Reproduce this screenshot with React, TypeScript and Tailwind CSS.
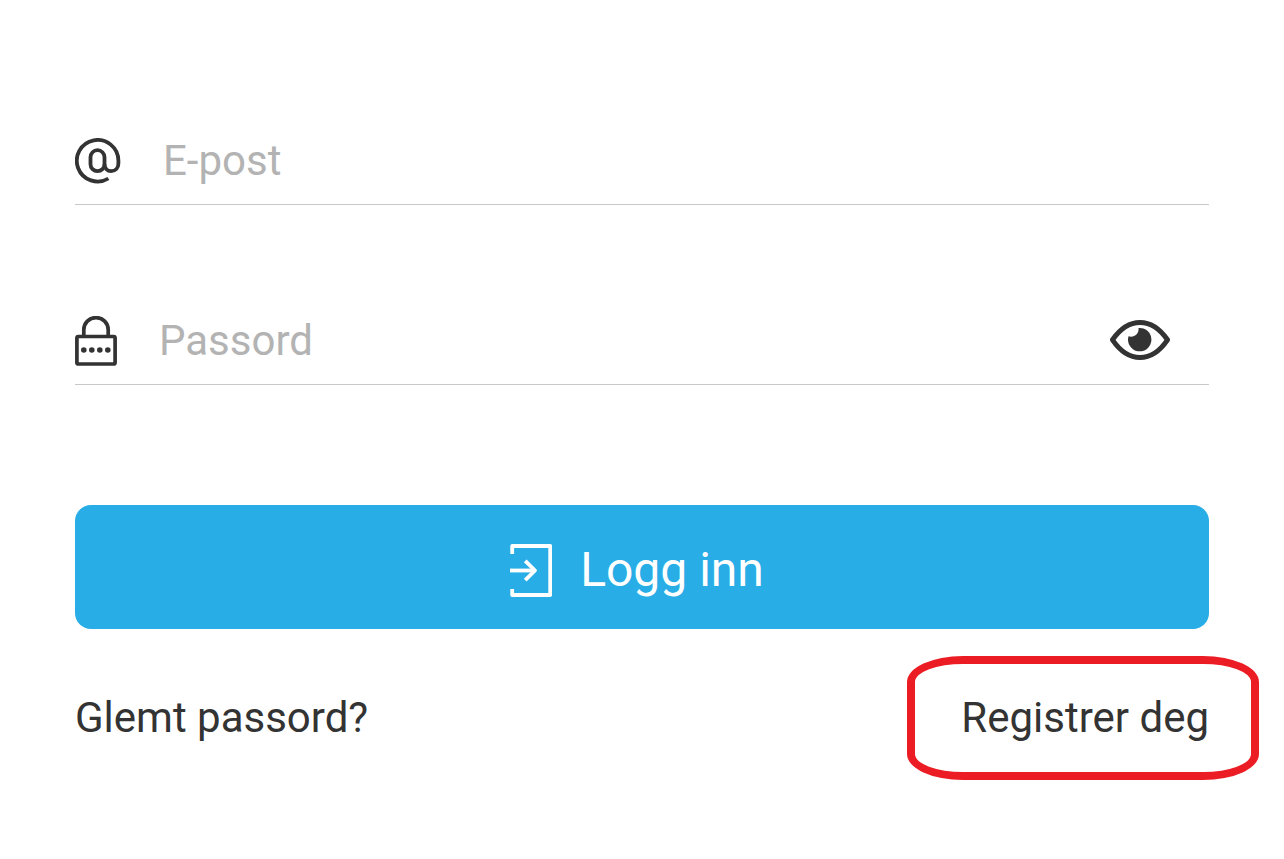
import { useState } from 'react';

const iconStroke = {
  fill: 'none',
  stroke: 'currentColor',
  strokeLinecap: 'round',
  strokeLinejoin: 'round',
} as const;

function AtIcon() {
  return (
    <svg viewBox="0 0 46 46" className="w-[46px] shrink-0" strokeWidth="3.8" {...iconStroke} strokeLinecap="butt" aria-hidden="true">
      <rect x="15.5" y="12.2" width="14" height="21" rx="7" />
      <path d="M29.5 26c.2 4.5 2.7 7.2 6.6 7.200 4.200 0 7.300-3.200 7.300-7.700v-3A20.800 20.800 0 1 0 33.400 40.500" />
    </svg>
  );
}

function LockIcon() {
  return (
    <svg viewBox="0 0 42 50" className="w-[42px] shrink-0" strokeWidth="3.7" {...iconStroke} aria-hidden="true">
      <rect x="1.900" y="20.500" width="38.200" height="27.500" rx="1.500" />
      <path d="M8.800 20v-6.200a12.200 12.200 0 0 1 24.400 0V20" />
      <g fill="currentColor" stroke="none">
        <circle cx="8.800" cy="34" r="2.800" />
        <circle cx="16.800" cy="34" r="2.800" />
        <circle cx="24.800" cy="34" r="2.800" />
        <circle cx="32.800" cy="34" r="2.800" />
      </g>
    </svg>
  );
}

function EyeIcon() {
  return (
    <svg viewBox="0 0 60 41" className="w-[60px]" strokeWidth="5" {...iconStroke} aria-hidden="true">
      <path d="M2.500 19.800C10 9 18.500 2.500 30 2.500s20 6.500 27.500 17.300C50 30.800 41.500 37.500 30 37.500s-20-6.700-27.500-17.700Z" />
      <path
        d="M28.500 8A11.700 11.700 0 1 1 18.500 16.300C23.500 18.200 29.500 14 28.500 8Z"
        fill="currentColor"
        stroke="none"
      />
    </svg>
  );
}

function LoginIcon() {
  return (
    <svg viewBox="0 0 42 53" className="w-[42px]" strokeWidth="3.800" {...iconStroke} strokeLinecap="butt" aria-hidden="true">
      <path d="M2.200 10V2h38v49h-38v-6" />
      <path d="M0 26.500h25" />
      <path d="M15.200 16.800l9.800 9.700-9.800 9.700" />
    </svg>
  );
}

const rowClass = 'flex h-[88px] items-center gap-[42px] border-b border-[#c8c8c8]';
const inputClass = 'h-full min-w-0 flex-1 bg-transparent text-[42px] outline-none placeholder:text-[#b3b3b3]';

export default function App() {
  const [showPassword, setShowPassword] = useState(false);

  return (
    <main className="min-h-screen bg-white px-[75px] pt-[117px] font-[Roboto,sans-serif] text-[#333333]">
      <form onSubmit={(e) => e.preventDefault()}>
        <div className={rowClass}>
          <label htmlFor="email" aria-label="E-post">
            <AtIcon />
          </label>
          <input id="email" type="email" placeholder="E-post" className={inputClass} />
        </div>

        <div className={`${rowClass} mt-[92px]`}>
          <label htmlFor="password" aria-label="Passord">
            <LockIcon />
          </label>
          <input
            id="password"
            type={showPassword ? 'text' : 'password'}
            placeholder="Passord"
            className={inputClass}
          />
          <button
            type="button"
            aria-label="Vis passord"
            className="mr-[39px] cursor-pointer"
            onClick={() => setShowPassword(!showPassword)}
          >
            <EyeIcon />
          </button>
        </div>

        <button
          type="submit"
          className="mt-[120px] flex h-[124px] w-full cursor-pointer items-center justify-center gap-7 rounded-2xl bg-[#29ade6] pt-1.5 pr-2.5 text-[48px] text-white"
        >
          <LoginIcon />
          Logg inn
        </button>
      </form>

      <nav className="mt-[27px] flex h-[124px] items-center justify-between text-[42px]">
        <a href="#glemt" className="pb-0.5">Glemt passord?</a>
        <a href="#registrer" className="relative flex h-full items-center pb-0.5">
          Registrer deg
          <span className="pointer-events-none absolute inset-y-0 -right-[50px] -left-[54px] rounded-[56px/26px] border-8 border-[#ec1c24]" />
        </a>
      </nav>
    </main>
  );
}
